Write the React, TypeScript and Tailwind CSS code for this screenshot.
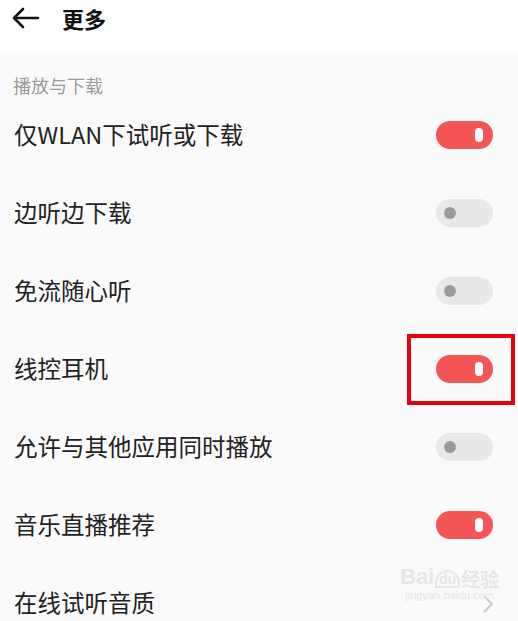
import React from "react";

const font = { fontFamily: '"Noto Sans CJK SC", "Noto Sans", sans-serif' };

function Toggle({ on }: { on: boolean }) {
  return on ? (
    <div className="w-[57px] h-[28px] rounded-full bg-[#f45656] flex items-center justify-end pr-[10px]">
      <div className="w-[8px] h-[14px] rounded-full bg-white" />
    </div>
  ) : (
    <div className="w-[57px] h-[28px] rounded-full bg-[#e9e9e9] flex items-center pl-[8px]">
      <div className="w-[12px] h-[12px] rounded-full bg-[#9b9b9b]" />
    </div>
  );
}

const rows: { label: string; on?: boolean; chevron?: boolean }[] = [
  { label: "仅WLAN下试听或下载", on: true },
  { label: "边听边下载", on: false },
  { label: "免流随心听", on: false },
  { label: "线控耳机", on: true },
  { label: "允许与其他应用同时播放", on: false },
  { label: "音乐直播推荐", on: true },
  { label: "在线试听音质", chevron: true },
];

export default function App() {
  return (
    <div className="w-[518px] h-[621px] overflow-hidden bg-[#fafafa] relative" style={font}>
      <div className="h-[53px] bg-white flex items-start">
        <div className="flex items-center h-[35px] pl-[12px]">
          <svg width="28" height="22" viewBox="0 0 28 22" fill="none" stroke="#111" strokeWidth="2.6" strokeLinecap="round" strokeLinejoin="round">
            <path d="M26 11H3" />
            <path d="M11 2L2 11l9 9" />
          </svg>
          <span className="ml-[22px] text-[22px] font-bold text-[#111] leading-none">更多</span>
        </div>
      </div>
      <div className="h-[43px] pl-[13px] pt-[21px] text-[18px] leading-[22px] text-[#9a9a9a]">播放与下载</div>
      {rows.map((r, i) => (
        <div key={i} className="h-[78px] flex items-center justify-between pl-[14px] pr-[25px]">
          <span className="text-[23.5px] text-[#222] leading-none">{r.label}</span>
          {r.chevron ? (
            <svg width="12" height="20" viewBox="0 0 12 20" fill="none" stroke="#c8c8c8" strokeWidth="2" className="mr-[-1px] mt-[2px]">
              <path d="M2 2l8 8-8 8" />
            </svg>
          ) : (
            <div className="relative">
              <Toggle on={!!r.on} />
              {i === 3 && (
                <div className="absolute left-[-29px] top-[-21px] w-[108px] h-[71px] border-[4px] border-[#e50012]" />
              )}
            </div>
          )}
        </div>
      ))}
      <div className="absolute left-[400px] top-[566px] flex flex-col items-center text-[#e6e6e6] pointer-events-none">
        <div className="flex items-end leading-none">
          <span className="text-[22px] font-bold" style={{ fontFamily: '"Liberation Sans", sans-serif' }}>Bai</span>
          <span className="text-[14px] font-bold border-[2px] border-[#e6e6e6] rounded-t-full px-[2px] mx-[1px]" style={{ fontFamily: '"Liberation Sans", sans-serif' }}>du</span>
          <span className="text-[19px] font-bold">经验</span>
        </div>
        <span className="text-[11px] leading-none mt-[2px]" style={{ fontFamily: '"Liberation Sans", sans-serif' }}>jingyan.baidu.com</span>
      </div>
    </div>
  );
}
